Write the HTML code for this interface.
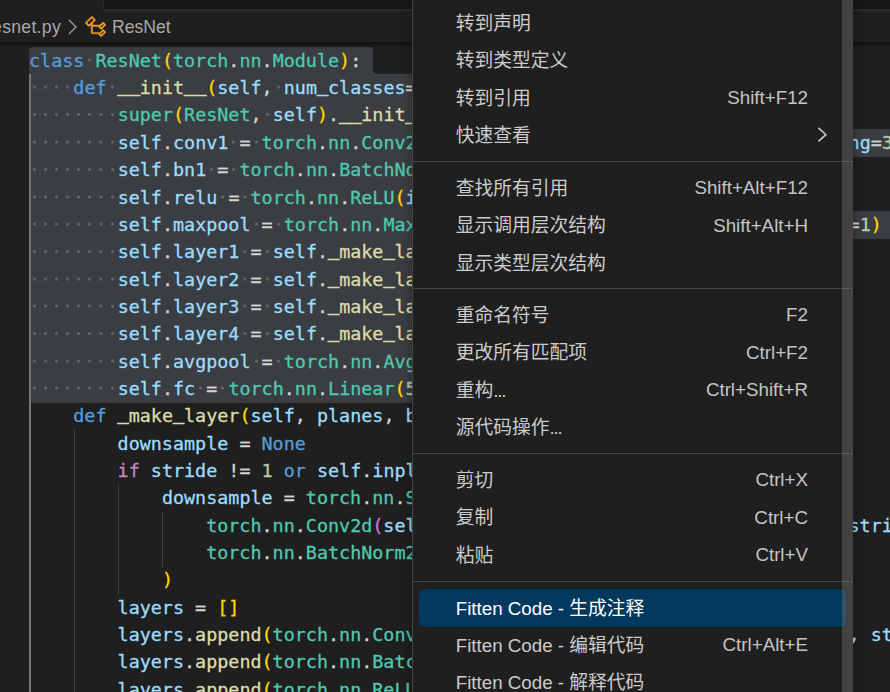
<!DOCTYPE html>
<html lang="zh-CN">
<head>
<meta charset="utf-8">
<title>resnet.py</title>
<style>
html,body{margin:0;padding:0;}
body{width:890px;height:692px;overflow:hidden;background:#1f1f1f;position:relative;
  font-family:"Liberation Sans","Noto Sans CJK SC",sans-serif;}
#root{position:absolute;left:0;top:0;width:890px;height:692px;overflow:hidden;background:#1f1f1f;}

/* tab strip remnants */
#tabempty{position:absolute;left:103px;top:0;width:787px;height:9px;background:#181818;
  border-left:1.3px solid #2b2b2b;border-bottom:2px solid #2b2b2b;}

/* breadcrumbs */
#crumbs{position:absolute;left:0;top:11px;width:890px;height:31px;color:#a9a9a9;font-size:17.6px;
  white-space:nowrap;}
#crumbs span{position:absolute;top:1.4px;line-height:31px;}
#crumbs svg{position:absolute;}
#crumbshadow{position:absolute;left:0;top:42px;width:890px;height:6px;
  background:linear-gradient(rgba(0,0,0,.5) 0,rgba(0,0,0,0) 100%);}

/* editor */
#code{position:absolute;left:29px;top:46.8px;font-family:"DejaVu Sans Mono","Liberation Mono",monospace;
  font-size:18.4px;color:#d4d4d4;white-space:pre;-webkit-text-stroke:0.3px;}
.ln{height:27.355px;line-height:27.355px;position:relative;}
.ln u{text-decoration:none;position:relative;top:-1.8px;-webkit-text-stroke:0.9px;}
.ln i{font-style:normal;display:inline-block;width:11.08px;height:27.355px;vertical-align:top;background:radial-gradient(circle at 50% 48.5%,#606366 0,#606366 1.1px,rgba(96,99,102,0) 2px);}
.k{color:#569cd6}.t{color:#4ec9b0}.f{color:#dcdcaa}.v{color:#9cdcfe}.c{color:#c586c0}
.n{color:#b5cea8}.b1{color:#ffd700}.b2{color:#da70d6}.b3{color:#179fff}
.w{color:#5c5f62}
.sel{position:absolute;background:#3a3d41;}
.g{position:absolute;width:1.3px;background:#404040;}
.ga{background:#757575;width:1.8px;margin-left:-0.2px;}

/* context menu */
#menu{position:absolute;left:412px;top:-20px;width:441px;height:740px;background:#1f1f1f;
  border:1.3px solid #454545;border-right:0;box-sizing:border-box;box-shadow:0 2px 10px rgba(0,0,0,.36);
  color:#cccccc;font-size:18.75px;font-weight:400;}
.mi{position:absolute;left:6px;width:427px;height:37.5px;line-height:37.5px;border-radius:6px;}
.mi .l{position:absolute;left:36.7px;top:0;white-space:nowrap;}
.mi .r{position:absolute;right:38px;top:-0.5px;white-space:nowrap;font-weight:400;color:#c4c4c4;}
.mi .chev{position:absolute;left:390px;top:0;width:30px;height:37.5px;}
.mi.hl{background:#04395e;color:#fff;}
.mi.hl .l{top:1px;}
.mi .d{letter-spacing:-1.2px;}
.sep{position:absolute;left:0;width:440px;height:1.3px;background:#454545;}
#msb{position:absolute;left:842px;top:0;width:11px;height:692px;background:rgba(121,121,121,.4);}
</style>
</head>
<body>
<div id="root">
<div id="tabempty"></div>
<div id="crumbs">
  <span style="left:-14.1px;letter-spacing:0.3px">resnet.py</span>
  <svg style="left:65px;top:6px" width="16" height="20" viewBox="0 0 16 20"><path d="M4 3 L11 10 L4 17" fill="none" stroke="#a0a0a0" stroke-width="1.3"/></svg>
  <svg style="left:83.8px;top:3.8px" width="23.5" height="23.5" viewBox="0 0 16 16"><path fill="#ee9d28" stroke="#ee9d28" stroke-width="0.3" d="M11.34 9.71h.71l2.67-2.67v-.71L13.38 5h-.7l-1.82 1.81h-5V5.56l1.86-1.85V3l-2-2H5L1 5v.71l2 2h.71l1.14-1.15v5.79l.5.5H10v.52l1.33 1.34h.71l2.67-2.67v-.71L13.37 10h-.7l-1.86 1.85h-5v-4H10v.48l1.34 1.38zm1.69-3.65l.63.63-2 2-.63-.63 2-2zm0 5l.63.63-2 2-.63-.63 2-2zM3.35 6.65l-1.29-1.3 3.29-3.29 1.3 1.29-3.3 3.3z"/></svg>
  <span style="left:112px">ResNet</span>
</div>
<div class="sel" style="left:29.00px;top:46.80px;width:344.28px;height:27.66px;border-radius:4px 4px 0 0;"></div>
<div class="sel" style="left:29.00px;top:74.16px;width:466.16px;height:27.66px;"></div>
<div class="sel" style="left:29.00px;top:101.51px;width:432.92px;height:27.66px;"></div>
<div class="sel" style="left:29.00px;top:128.87px;width:1020.16px;height:27.66px;"></div>
<div class="sel" style="left:29.00px;top:156.22px;width:488.32px;height:27.66px;"></div>
<div class="sel" style="left:29.00px;top:183.57px;width:532.64px;height:27.66px;"></div>
<div class="sel" style="left:29.00px;top:210.93px;width:865.04px;height:27.66px;"></div>
<div class="sel" style="left:29.00px;top:238.29px;width:599.12px;height:27.66px;"></div>
<div class="sel" style="left:29.00px;top:265.64px;width:721.00px;height:27.66px;"></div>
<div class="sel" style="left:29.00px;top:293.00px;width:721.00px;height:27.66px;"></div>
<div class="sel" style="left:29.00px;top:320.35px;width:721.00px;height:27.66px;"></div>
<div class="sel" style="left:29.00px;top:347.71px;width:610.20px;height:27.66px;"></div>
<div class="sel" style="left:29.00px;top:375.06px;width:776.40px;height:27.66px;border-radius:0 0 4px 4px;"></div>
<div style="position:absolute;left:373.28px;top:70.16px;width:4px;height:4px;background:radial-gradient(circle at 100% 0,rgba(58,61,65,0) 3.5px,#3a3d41 4.3px)"></div>

<div class="g ga" style="left:29.20px;top:74.16px;height:629.16px"></div>
<div class="g" style="left:73.52px;top:101.51px;height:300.91px"></div>
<div class="g" style="left:73.52px;top:429.77px;height:273.55px"></div>
<div class="g" style="left:117.84px;top:484.48px;height:109.42px"></div>
<div class="g" style="left:162.16px;top:511.84px;height:54.71px"></div>

<div id="code"><div class="ln"><span class="k">class</span><i> </i><span class="t">ResNet</span><span class="b1">(</span><span class="t">torch</span>.<span class="t">nn</span>.<span class="t">Module</span><span class="b1">)</span>:</div><div class="ln"><i> </i><i> </i><i> </i><i> </i><span class="k">def</span><i> </i><span class="f"><u>_</u><u>_</u>init<u>_</u><u>_</u></span><span class="b1">(</span><span class="v">self</span>,<i> </i><span class="v">num<u>_</u>classes</span>=<span class="n">1000</span><span class="b1">)</span>:</div><div class="ln"><i> </i><i> </i><i> </i><i> </i><i> </i><i> </i><i> </i><i> </i><span class="t">super</span><span class="b1">(</span><span class="t">ResNet</span>,<i> </i><span class="v">self</span><span class="b1">)</span>.<span class="f"><u>_</u><u>_</u>init<u>_</u><u>_</u></span><span class="b1">()</span></div><div class="ln"><i> </i><i> </i><i> </i><i> </i><i> </i><i> </i><i> </i><i> </i><span class="v">self</span>.<span class="v">conv1</span><i> </i>=<i> </i><span class="t">torch</span>.<span class="t">nn</span>.<span class="t">Conv2d</span><span class="b1">(</span><span class="n">3</span>,<i> </i><span class="n">64</span>,<i> </i><span class="v">kernel<u>_</u>size</span>=<span class="n">7</span>,<i> </i><span class="v">stride</span>=<span class="n">2</span>,<i> </i><span class="v">padding</span>=<span class="n">3</span>,<i> </i><span class="v">bias</span>=<span class="k">False</span><span class="b1">)</span></div><div class="ln"><i> </i><i> </i><i> </i><i> </i><i> </i><i> </i><i> </i><i> </i><span class="v">self</span>.<span class="v">bn1</span><i> </i>=<i> </i><span class="t">torch</span>.<span class="t">nn</span>.<span class="t">BatchNorm2d</span><span class="b1">(</span><span class="n">64</span><span class="b1">)</span></div><div class="ln"><i> </i><i> </i><i> </i><i> </i><i> </i><i> </i><i> </i><i> </i><span class="v">self</span>.<span class="v">relu</span><i> </i>=<i> </i><span class="t">torch</span>.<span class="t">nn</span>.<span class="t">ReLU</span><span class="b1">(</span><span class="v">inplace</span>=<span class="k">True</span><span class="b1">)</span></div><div class="ln"><i> </i><i> </i><i> </i><i> </i><i> </i><i> </i><i> </i><i> </i><span class="v">self</span>.<span class="v">maxpool</span><i> </i>=<i> </i><span class="t">torch</span>.<span class="t">nn</span>.<span class="t">MaxPool2d</span><span class="b1">(</span><span class="v">kernel<u>_</u>size</span>=<span class="n">3</span>,<i> </i><span class="v">stride</span>=<span class="n">2</span>,<i> </i><span class="v">padding</span>=<span class="n">1</span><span class="b1">)</span></div><div class="ln"><i> </i><i> </i><i> </i><i> </i><i> </i><i> </i><i> </i><i> </i><span class="v">self</span>.<span class="v">layer1</span><i> </i>=<i> </i><span class="v">self</span>.<span class="f"><u>_</u>make<u>_</u>layer</span><span class="b1">(</span><span class="n">64</span>,<i> </i><span class="v">layers</span><span class="b2">[</span><span class="n">0</span><span class="b2">]</span><span class="b1">)</span></div><div class="ln"><i> </i><i> </i><i> </i><i> </i><i> </i><i> </i><i> </i><i> </i><span class="v">self</span>.<span class="v">layer2</span><i> </i>=<i> </i><span class="v">self</span>.<span class="f"><u>_</u>make<u>_</u>layer</span><span class="b1">(</span><span class="n">128</span>,<i> </i><span class="v">layers</span><span class="b2">[</span><span class="n">1</span><span class="b2">]</span>,<i> </i><span class="v">stride</span>=<span class="n">2</span><span class="b1">)</span></div><div class="ln"><i> </i><i> </i><i> </i><i> </i><i> </i><i> </i><i> </i><i> </i><span class="v">self</span>.<span class="v">layer3</span><i> </i>=<i> </i><span class="v">self</span>.<span class="f"><u>_</u>make<u>_</u>layer</span><span class="b1">(</span><span class="n">256</span>,<i> </i><span class="v">layers</span><span class="b2">[</span><span class="n">2</span><span class="b2">]</span>,<i> </i><span class="v">stride</span>=<span class="n">2</span><span class="b1">)</span></div><div class="ln"><i> </i><i> </i><i> </i><i> </i><i> </i><i> </i><i> </i><i> </i><span class="v">self</span>.<span class="v">layer4</span><i> </i>=<i> </i><span class="v">self</span>.<span class="f"><u>_</u>make<u>_</u>layer</span><span class="b1">(</span><span class="n">512</span>,<i> </i><span class="v">layers</span><span class="b2">[</span><span class="n">3</span><span class="b2">]</span>,<i> </i><span class="v">stride</span>=<span class="n">2</span><span class="b1">)</span></div><div class="ln"><i> </i><i> </i><i> </i><i> </i><i> </i><i> </i><i> </i><i> </i><span class="v">self</span>.<span class="v">avgpool</span><i> </i>=<i> </i><span class="t">torch</span>.<span class="t">nn</span>.<span class="t">AvgPool2d</span><span class="b1">(</span><span class="n">7</span>,<i> </i><span class="v">stride</span>=<span class="n">1</span><span class="b1">)</span></div><div class="ln"><i> </i><i> </i><i> </i><i> </i><i> </i><i> </i><i> </i><i> </i><span class="v">self</span>.<span class="v">fc</span><i> </i>=<i> </i><span class="t">torch</span>.<span class="t">nn</span>.<span class="t">Linear</span><span class="b1">(</span><span class="n">512</span><i> </i>*<i> </i><span class="v">block</span>.<span class="v">expansion</span>,<i> </i><span class="v">num<u>_</u>classes</span><span class="b1">)</span></div><div class="ln">    <span class="k">def</span> <span class="f"><u>_</u>make<u>_</u>layer</span><span class="b1">(</span><span class="v">self</span>, <span class="v">planes</span>, <span class="v">blocks</span>, <span class="v">stride</span>=<span class="n">1</span><span class="b1">)</span>:</div><div class="ln">        <span class="v">downsample</span> = <span class="k">None</span></div><div class="ln">        <span class="c">if</span> <span class="v">stride</span> != <span class="n">1</span> <span class="k">or</span> <span class="v">self</span>.<span class="v">inplanes</span> != <span class="v">planes</span> * <span class="n">4</span>:</div><div class="ln">            <span class="v">downsample</span> = <span class="t">torch</span>.<span class="t">nn</span>.<span class="t">Sequential</span><span class="b1">(</span></div><div class="ln">                <span class="t">torch</span>.<span class="t">nn</span>.<span class="t">Conv2d</span><span class="b2">(</span><span class="v">self</span>.<span class="v">inplanes</span>, <span class="v">planes</span> * <span class="n">4</span>, <span class="v">kernel<u>_</u>size</span>=<span class="n">1</span>, <span class="v">stride</span>=<span class="v">stride</span>, <span class="v">bias</span>=<span class="k">False</span><span class="b2">)</span>,</div><div class="ln">                <span class="t">torch</span>.<span class="t">nn</span>.<span class="t">BatchNorm2d</span><span class="b2">(</span><span class="v">planes</span> * <span class="n">4</span><span class="b2">)</span>,</div><div class="ln">            <span class="b1">)</span></div><div class="ln">        <span class="v">layers</span> = <span class="b1">[]</span></div><div class="ln">        <span class="v">layers</span>.<span class="f">append</span><span class="b1">(</span><span class="t">torch</span>.<span class="t">nn</span>.<span class="t">Conv2d</span><span class="b2">(</span><span class="v">self</span>.<span class="v">inplanes</span>, <span class="v">planes</span>, <span class="v">kernel<u>_</u>size</span>=<span class="n">3</span>, <span class="v">stride</span>=<span class="v">stride</span>, <span class="v">padding</span>=<span class="n">1</span><span class="b2">)</span><span class="b1">)</span></div><div class="ln">        <span class="v">layers</span>.<span class="f">append</span><span class="b1">(</span><span class="t">torch</span>.<span class="t">nn</span>.<span class="t">BatchNorm2d</span><span class="b2">(</span><span class="v">planes</span><span class="b2">)</span><span class="b1">)</span></div><div class="ln">        <span class="v">layers</span>.<span class="f">append</span><span class="b1">(</span><span class="t">torch</span>.<span class="t">nn</span>.<span class="t">ReLU</span><span class="b2">(</span><span class="v">inplace</span>=<span class="k">True</span><span class="b2">)</span><span class="b1">)</span></div></div>
<div id="crumbshadow"></div>
<div id="menu">
<div class="mi" style="top:23.75px"><span class="l">转到声明</span></div>
<div class="mi" style="top:61.25px"><span class="l">转到类型定义</span></div>
<div class="mi" style="top:98.75px"><span class="l">转到引用</span><span class="r">Shift+F12</span></div>
<div class="mi" style="top:136.25px"><span class="l">快速查看</span><svg class="chev" viewBox="0 0 30 37.5"><path d="M9.4 10.9 L16.9 17.65 L9.4 24.4" fill="none" stroke="#c8c8c8" stroke-width="1.6"/></svg></div>
<div class="sep" style="top:179.75px"></div>
<div class="mi" style="top:188.55px"><span class="l">查找所有引用</span><span class="r">Shift+Alt+F12</span></div>
<div class="mi" style="top:226.05px"><span class="l">显示调用层次结构</span><span class="r">Shift+Alt+H</span></div>
<div class="mi" style="top:263.55px"><span class="l">显示类型层次结构</span></div>
<div class="sep" style="top:307.05px"></div>
<div class="mi" style="top:315.85px"><span class="l">重命名符号</span><span class="r">F2</span></div>
<div class="mi" style="top:353.35px"><span class="l">更改所有匹配项</span><span class="r">Ctrl+F2</span></div>
<div class="mi" style="top:390.85px"><span class="l">重构<span class="d">...</span></span><span class="r">Ctrl+Shift+R</span></div>
<div class="mi" style="top:428.35px"><span class="l">源代码操作<span class="d">...</span></span></div>
<div class="sep" style="top:471.85px"></div>
<div class="mi" style="top:480.65px"><span class="l">剪切</span><span class="r">Ctrl+X</span></div>
<div class="mi" style="top:518.15px"><span class="l">复制</span><span class="r">Ctrl+C</span></div>
<div class="mi" style="top:555.65px"><span class="l">粘贴</span><span class="r">Ctrl+V</span></div>
<div class="sep" style="top:599.80px"></div>
<div class="mi hl" style="top:608.25px"><span class="l">Fitten Code - 生成注释</span></div>
<div class="mi" style="top:645.85px"><span class="l">Fitten Code - 编辑代码</span><span class="r">Ctrl+Alt+E</span></div>
<div class="mi" style="top:683.35px"><span class="l">Fitten Code - 解释代码</span></div>

</div>
<div id="msb"></div>
</div>
</body>
</html>
